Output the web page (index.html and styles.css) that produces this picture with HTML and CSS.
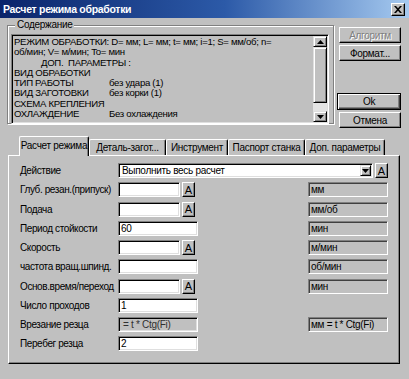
FILE: index.html
```html
<!DOCTYPE html>
<html lang="ru">
<head>
    <meta charset="UTF-8">
    <title>Расчет режима обработки</title>
    <link rel="stylesheet" href="styles.css">
</head>
<body>
    <div class="window">
        <div class="titlebar">
            <span class="title">Расчет режима обработки</span>
            <span class="close-btn">
                <svg width="8" height="7" viewBox="0 0 8 7"><path d="M0 0h2l2 2.3 2-2.3h2l-3 3.5 3 3.5h-2l-2-2.3-2 2.3h-2l3-3.5z" fill="#000"/></svg>
            </span>
        </div>

        <div class="top">
            <fieldset class="group">
                <legend>Содержание</legend>
                <div class="memo">
                    <div class="memo-text">
                        <div class="line">РЕЖИМ ОБРАБОТКИ: D= мм; L= мм; t= мм; i=1; S= мм/об; n=</div>
                        <div class="line">об/мин; V= м/мин; To= мин</div>
                        <div class="line indent">ДОП.&nbsp; ПАРАМЕТРЫ :</div>
                        <div class="line">ВИД ОБРАБОТКИ</div>
                        <div class="line"><span class="key">ТИП РАБОТЫ</span>без удара (1)</div>
                        <div class="line"><span class="key">ВИД ЗАГОТОВКИ</span>без корки (1)</div>
                        <div class="line">СХЕМА КРЕПЛЕНИЯ</div>
                        <div class="line"><span class="key">ОХЛАЖДЕНИЕ</span>Без охлаждения</div>
                    </div>
                    <div class="scrollbar">
                        <div class="sb-btn"><svg width="7" height="4" viewBox="0 0 7 4"><path d="M3.5 0L7 4H0z" fill="#000"/></svg></div>
                        <div class="sb-thumb"></div>
                        <div class="sb-track"></div>
                        <div class="sb-btn"><svg width="7" height="4" viewBox="0 0 7 4"><path d="M0 0h7L3.5 4z" fill="#000"/></svg></div>
                    </div>
                </div>
            </fieldset>

            <div class="side">
                <div class="btn disabled">Алгоритм</div>
                <div class="btn">Формат...</div>
                <div class="spacer"></div>
                <div class="btn default">Ok</div>
                <div class="btn">Отмена</div>
            </div>
        </div>

        <div class="tabs">
            <div class="tab active">Расчет режима</div>
            <div class="tab w77">Деталь-загот...</div>
            <div class="tab w62">Инструмент</div>
            <div class="tab w77">Паспорт станка</div>
            <div class="tab w80">Доп. параметры</div>
        </div>

        <div class="panel">
            <div class="form">
                <div class="label">Действие</div>
                <div class="combo-row">
                    <div class="combo">
                        <span class="combo-text">Выполнить весь расчет</span>
                        <span class="drop"><svg width="7" height="4" viewBox="0 0 7 4"><path d="M0 0h7L3.5 4z" fill="#000"/></svg></span>
                    </div>
                    <div class="abtn">A</div>
                </div>

                <div class="label">Глуб. резан.(припуск)</div>
                <div class="field-a"><div class="edit short"></div><div class="abtn">A</div></div>
                <div class="unit">мм</div>

                <div class="label">Подача</div>
                <div class="field-a"><div class="edit short"></div><div class="abtn">A</div></div>
                <div class="unit">мм/об</div>

                <div class="label">Период стойкости</div>
                <div class="edit">60</div>
                <div class="unit">мин</div>

                <div class="label">Скорость</div>
                <div class="field-a"><div class="edit short"></div><div class="abtn">A</div></div>
                <div class="unit">м/мин</div>

                <div class="label">частота вращ.шпинд.</div>
                <div class="edit"></div>
                <div class="unit">об/мин</div>

                <div class="label">Основ.время/переход</div>
                <div class="field-a"><div class="edit short"></div><div class="abtn">A</div></div>
                <div class="unit">мин</div>

                <div class="label">Число проходов</div>
                <div class="edit">1</div>
                <div class="blank"></div>

                <div class="label">Врезание резца</div>
                <div class="edit readonly">= t * Ctg(Fi)</div>
                <div class="unit">мм = t * Ctg(Fi)</div>

                <div class="label">Перебег резца</div>
                <div class="edit">2</div>
                <div class="blank"></div>
            </div>
        </div>
    </div>
</body>
</html>
```

FILE: styles.css
```css
body {
    margin: 0;
    padding: 0;
    background-color: #c0c0c0;
    font-family: 'Liberation Sans', Arial, sans-serif;
    font-size: 10px;
    letter-spacing: -0.3px;
    color: #000;
}

.window {
    width: 409px;
    height: 379px;
    background-color: #c0c0c0;
    overflow: hidden;
}

/* Title bar */
.titlebar {
    height: 18px;
    display: flex;
    align-items: center;
    justify-content: space-between;
    padding: 0 4px 0 3px;
    background: linear-gradient(to right, #0a246a, #2c5aa8 55%, #a6caf0);
}

.title {
    color: #fff;
    font-weight: bold;
    font-size: 10.5px;
}

.close-btn {
    width: 12px;
    height: 11px;
    display: flex;
    align-items: center;
    justify-content: center;
    background-color: #c0c0c0;
    border: 1px solid;
    border-color: #fff #000 #000 #fff;
    box-shadow: inset -1px -1px #808080;
}

/* Top part: memo + buttons */
.top {
    display: flex;
    align-items: flex-start;
}

.group {
    margin: 1px 0 0 7px;
    padding: 3px 4px 3px 3px;
    width: 327px;
    height: 105px;
    box-sizing: border-box;
    border: 1px solid #808080;
    box-shadow: inset 1px 1px #fff, 1px 1px #fff;
    min-width: 0;
}

.group legend {
    padding: 0 2px;
    margin-left: 4px;
    line-height: 12px;
    background-color: #c0c0c0;
}

.memo {
    display: flex;
    height: 90px;
    box-sizing: border-box;
    border: 1px solid;
    border-color: #808080 #fff #fff #808080;
    box-shadow: inset 1px 1px #000, inset -1px -1px #dfdfdf;
    padding: 1px;
}

.memo-text {
    flex: 1;
    padding: 1px 0 0 1px;
    font-size: 9.6px;
    line-height: 10.3px;
    white-space: nowrap;
    overflow: hidden;
}

.indent {
    padding-left: 27px;
}

.key {
    display: inline-block;
    width: 95px;
}

.scrollbar {
    width: 14px;
    display: flex;
    flex-direction: column;
}

.sb-btn {
    height: 9px;
    display: flex;
    align-items: center;
    justify-content: center;
    border: 1px solid;
    border-color: #dfdfdf #000 #000 #dfdfdf;
    box-shadow: inset 1px 1px #fff, inset -1px -1px #808080;
    background-color: #c0c0c0;
}

.sb-thumb {
    height: 56px;
    box-sizing: border-box;
    border: 1px solid;
    border-color: #dfdfdf #000 #000 #dfdfdf;
    box-shadow: inset 1px 1px #fff, inset -1px -1px #808080;
}

.sb-track {
    flex: 1;
    background-color: #e4e4e4;
}

/* Right side buttons */
.side {
    margin: 9px 0 0 5px;
    width: 62px;
    height: 101px;
    display: flex;
    flex-direction: column;
    gap: 2px;
}

.spacer {
    flex: 1;
}

.btn {
    height: 16px;
    box-sizing: border-box;
    display: flex;
    align-items: center;
    justify-content: center;
    border: 1px solid;
    border-color: #fff #000 #000 #fff;
    box-shadow: inset -1px -1px #808080;
}

.btn.disabled {
    color: #808080;
    text-shadow: 1px 1px #fff;
}

.btn.default {
    height: 17px;
    margin: 0 0 0 -2px;
    border-color: #000;
    box-shadow: inset 1px 1px #fff, inset -1px -1px #404040, inset -2px -2px #808080;
}

/* Tabs */
.tabs {
    display: flex;
    align-items: flex-end;
    height: 19px;
    margin: 8px 0 0 19px;
}

.tab {
    height: 16px;
    box-sizing: border-box;
    width: 70px;
    display: flex;
    align-items: center;
    justify-content: center;
    border: 1px solid;
    border-bottom: none;
    border-color: #fff #000 #000 #fff;
    box-shadow: inset -1px 0 #808080;
    border-radius: 2px 2px 0 0;
    background-color: #c0c0c0;
    white-space: nowrap;
}

.tab.active {
    height: 20px;
    margin-bottom: -1px;
    padding-bottom: 2px;
}

.tab.w77 { width: 77px; }
.tab.w62 { width: 62px; }
.tab.w80 { width: 80px; }

/* Tab panel */
.panel {
    margin-left: 8px;
    width: 392px;
    height: 209px;
    box-sizing: border-box;
    border: 1px solid;
    border-color: #fff #000 #000 #fff;
    box-shadow: inset -1px -1px #808080;
    padding: 7px 0 0 11px;
}

.form {
    display: grid;
    grid-template-columns: 98px 80px 110px 80px;
    grid-auto-rows: 15px;
    row-gap: 4.25px;
    align-items: center;
}

.label {
    white-space: nowrap;
    letter-spacing: -0.4px;
}

.combo-row {
    grid-column: 2 / 5;
    display: flex;
    gap: 2px;
    height: 15px;
}

.combo {
    flex: 1;
    display: flex;
    align-items: center;
    background-color: #fff;
    border: 1px solid;
    border-color: #808080 #fff #fff #808080;
    box-shadow: inset 1px 1px #000, inset -1px -1px #dfdfdf;
    padding: 1px 1px 1px 3px;
}

.combo-text {
    flex: 1;
}

.drop {
    width: 11px;
    height: 11px;
    box-sizing: border-box;
    display: flex;
    align-items: center;
    justify-content: center;
    background-color: #c0c0c0;
    border: 1px solid;
    border-color: #dfdfdf #000 #000 #dfdfdf;
    box-shadow: inset 1px 1px #fff, inset -1px -1px #808080;
}

.abtn {
    width: 13px;
    height: 15px;
    box-sizing: border-box;
    display: flex;
    align-items: center;
    justify-content: center;
    font-size: 11px;
    letter-spacing: 0;
    border: 1px solid;
    border-color: #fff #000 #000 #fff;
    box-shadow: inset -1px -1px #808080;
}

.field-a {
    display: flex;
    gap: 2px;
    height: 15px;
}

.edit {
    height: 15px;
    box-sizing: border-box;
    background-color: #fff;
    border: 1px solid;
    border-color: #808080 #fff #fff #808080;
    box-shadow: inset 1px 1px #000, inset -1px -1px #dfdfdf;
    padding: 0 2px;
    line-height: 13px;
    white-space: nowrap;
}

.edit.short {
    width: 62px;
}

.edit.readonly {
    background-color: #c0c0c0;
    color: #303030;
    padding-left: 4px;
}

.unit {
    grid-column: 4;
    height: 15px;
    box-sizing: border-box;
    border: 1px solid;
    border-color: #808080 #fff #fff #808080;
    box-shadow: inset 1px 1px #404040;
    padding: 0 2px;
    line-height: 13px;
    white-space: nowrap;
}

.blank {
    grid-column: 4;
}
```
